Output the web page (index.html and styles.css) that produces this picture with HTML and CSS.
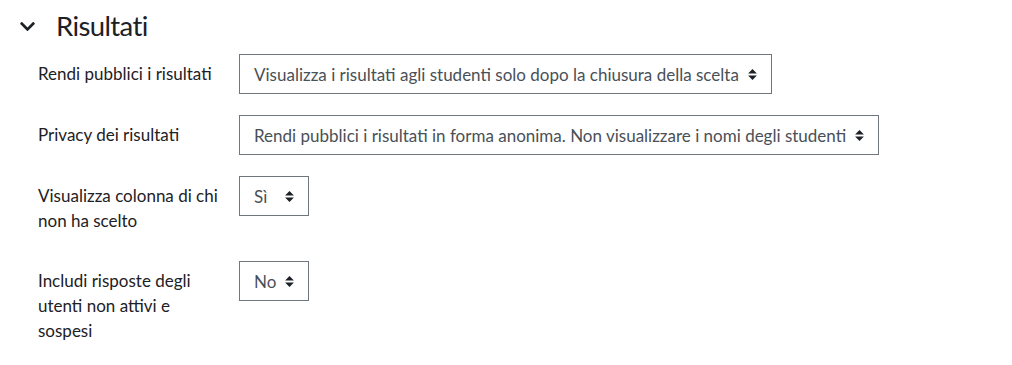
FILE: index.html
```html
<!DOCTYPE html>
<html lang="it">
<head>
<meta charset="utf-8">
<title>Risultati</title>
<link rel="stylesheet" href="styles.css">
</head>
<body>
<div class="page">
  <div class="section-header">
    <span class="toggle">
      <svg width="15" height="9" viewBox="5 120 438 270" aria-hidden="true"><path fill="#1d2125" d="M207.029 381.476L12.686 187.132c-9.373-9.373-9.373-24.569 0-33.941l22.667-22.667c9.357-9.357 24.522-9.375 33.901-.04L224 284.505l154.745-154.021c9.379-9.335 24.544-9.317 33.901.04l22.667 22.667c9.373 9.373 9.373 24.569 0 33.941L240.971 381.476c-9.373 9.372-24.569 9.372-33.942 0z"/></svg>
    </span>
    <h3 class="section-title">Risultati</h3>
  </div>

  <div class="form">
    <div class="form-row">
      <label class="form-label">Rendi pubblici i risultati</label>
      <div class="form-field">
        <div class="select">
          <span class="select-text">Visualizza i risultati agli studenti solo dopo la chiusura della scelta</span>
          <svg class="select-arrow" width="9" height="11" viewBox="0 0 4 5" aria-hidden="true"><path d="M2 0L0 2h4zm0 5L0 3h4z"/></svg>
        </div>
      </div>
    </div>

    <div class="form-row">
      <label class="form-label">Privacy dei risultati</label>
      <div class="form-field">
        <div class="select">
          <span class="select-text">Rendi pubblici i risultati in forma anonima. Non visualizzare i nomi degli studenti</span>
          <svg class="select-arrow" width="9" height="11" viewBox="0 0 4 5" aria-hidden="true"><path d="M2 0L0 2h4zm0 5L0 3h4z"/></svg>
        </div>
      </div>
    </div>

    <div class="form-row">
      <label class="form-label">Visualizza colonna di chi non ha scelto</label>
      <div class="form-field">
        <div class="select select-short">
          <span class="select-text">Sì</span>
          <svg class="select-arrow" width="9" height="11" viewBox="0 0 4 5" aria-hidden="true"><path d="M2 0L0 2h4zm0 5L0 3h4z"/></svg>
        </div>
      </div>
    </div>

    <div class="form-row">
      <label class="form-label">Includi risposte degli utenti non attivi e sospesi</label>
      <div class="form-field">
        <div class="select select-short">
          <span class="select-text">No</span>
          <svg class="select-arrow" width="9" height="11" viewBox="0 0 4 5" aria-hidden="true"><path d="M2 0L0 2h4zm0 5L0 3h4z"/></svg>
        </div>
      </div>
    </div>
  </div>
</div>
</body>
</html>
```

FILE: styles.css
```css
html, body {
  margin: 0;
  padding: 0;
  background: #ffffff;
}

body {
  font-family: "Lato", "Noto Sans", sans-serif;
  font-size: 17px;
  color: #1d2125;
}

.page {
  padding: 8px 0 0 20px;
}

.section-header {
  display: flex;
  align-items: center;
  height: 36px;
}

.toggle {
  display: flex;
  align-items: center;
  width: 15px;
  height: 36px;
  margin-right: 21px;
}

.section-title {
  margin: 0;
  font-size: 27.5px;
  font-weight: 400;
  letter-spacing: -0.6px;
  line-height: 36px;
  color: #1d2125;
}

.form {
  margin-top: 10px;
  padding-left: 18px;
}

.form-row {
  display: flex;
  align-items: flex-start;
  margin-bottom: 21px;
}

.form-label {
  width: 185px;
  padding: 7px 16px 7px 0;
  line-height: 25px;
  color: #1d2125;
}

.form-field {
  display: flex;
}

.select {
  display: flex;
  align-items: center;
  box-sizing: border-box;
  height: 40px;
  padding: 0 14px 0 14px;
  border: 1px solid #6f767e;
  background: #ffffff;
  color: #495057;
  white-space: nowrap;
}

.select-arrow {
  flex: none;
  margin-left: 9px;
  fill: #1d2125;
}

.select-short {
  width: 70px;
  justify-content: space-between;
}
```
